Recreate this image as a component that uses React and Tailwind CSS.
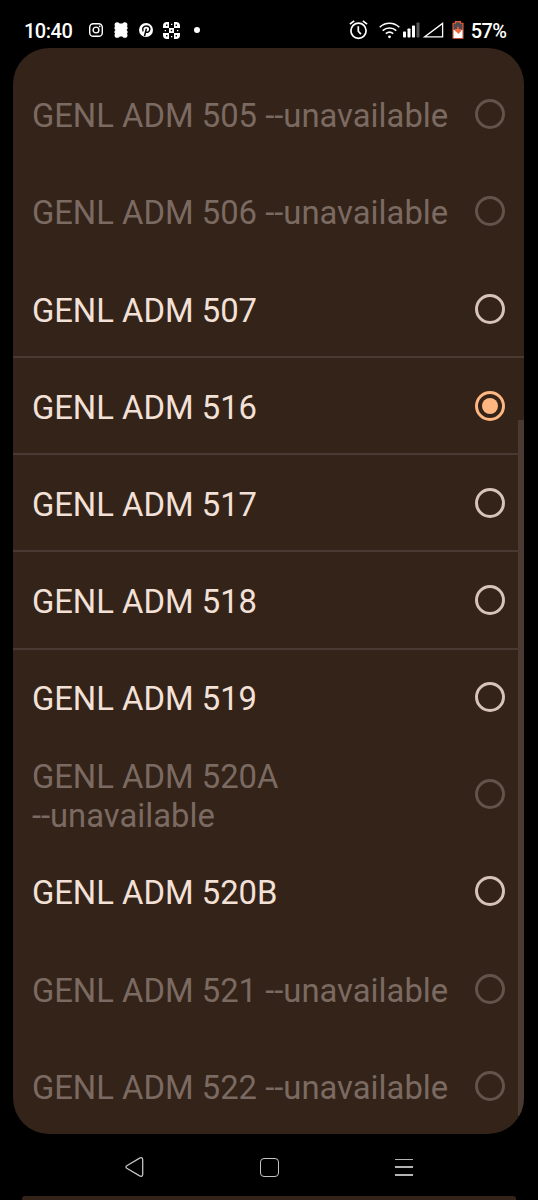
const options = [
  { label: "GENL ADM 505 --unavailable", disabled: true },
  { label: "GENL ADM 506 --unavailable", disabled: true },
  { label: "GENL ADM 507", divider: true },
  { label: "GENL ADM 516", selected: true, divider: true },
  { label: "GENL ADM 517", divider: true },
  { label: "GENL ADM 518", divider: true },
  { label: "GENL ADM 519" },
  { label: "GENL ADM 520A\n--unavailable", disabled: true },
  { label: "GENL ADM 520B" },
  { label: "GENL ADM 521 --unavailable", disabled: true },
  { label: "GENL ADM 522 --unavailable", disabled: true },
];

function InstagramIcon() {
  return (
    <svg className="w-[14px] h-[14px]" viewBox="0 0 14 14" fill="none" stroke="#fff" strokeWidth="1.4">
      <rect x="0.7" y="0.7" width="12.6" height="12.6" rx="3.6" />
      <circle cx="7" cy="7" r="2.9" />
      <circle cx="10.7" cy="3.3" r="0.9" fill="#fff" stroke="none" />
    </svg>
  );
}

function FlowerIcon() {
  return (
    <svg className="w-[14px] h-[16px] ml-[11px]" viewBox="0 0 14 16" fill="#fff">
      <rect x="1.3" y="1.5" width="11.4" height="13" />
      <circle cx="3.2" cy="2.8" r="2.6" />
      <circle cx="10.8" cy="2.8" r="2.6" />
      <circle cx="3.2" cy="13.2" r="2.6" />
      <circle cx="10.8" cy="13.2" r="2.6" />
      <circle cx="2" cy="6" r="1.7" />
      <circle cx="2" cy="10" r="1.7" />
      <circle cx="12" cy="6" r="1.7" />
      <circle cx="12" cy="10" r="1.7" />
    </svg>
  );
}

function PinterestIcon() {
  return (
    <svg className="w-[14px] h-[14px] ml-[11px]" viewBox="0 0 14 14" fill="none">
      <circle cx="7" cy="7" r="7" fill="#fff" />
      <path
        d="M4.2 8.3C2.6 5.6 4.6 3 7.3 3c2.4 0 3.9 1.6 3.5 3.7-.4 2.4-2.9 3.4-4 1.9M7.4 5.6 5.5 13"
        stroke="#000"
        strokeWidth="1.5"
      />
    </svg>
  );
}

function GridIcon() {
  return (
    <svg className="w-[17px] h-[17px] ml-[10px]" viewBox="0 0 17 17" fill="#fff">
      <path d="M4 0h2v6H0V4a4 4 0 0 1 4-4ZM11 0h2a4 4 0 0 1 4 4v2h-6ZM0 11h6v6H4a4 4 0 0 1-4-4ZM11 11h6v2a4 4 0 0 1-4 4h-2Z" />
      <path d="M6 6h5v5H6zM8 1.7h1.3V3H8zM8 14h1.3v1.3H8zM1.7 8H3v1.3H1.7zM14 8h1.3v1.3H14z" />
      <path d="M3 2.6h1.4V4H3zM12.6 2.6H14V4h-1.4zM3 13h1.4v1.4H3zM12.6 13H14v1.4h-1.4zM7.8 7.8h1.4v1.4H7.8z" fill="#000" />
    </svg>
  );
}

function AlarmIcon() {
  return (
    <svg className="w-[19px] h-[20px]" viewBox="0 0 19 20" fill="none" stroke="#fff" strokeWidth="1.7">
      <circle cx="9.5" cy="10.8" r="7.6" />
      <path d="M9.3 6.3v4.9l2.6 2.9M.9 4.2 5.2.9M18.1 4.2 13.8.9" />
    </svg>
  );
}

function WifiIcon() {
  return (
    <svg className="w-[21px] h-[17px] ml-[11px]" viewBox="0 0 21 17" fill="none" stroke="#fff" strokeWidth="1.6">
      <path d="M.7 5.3a14 14 0 0 1 19.6 0M3.7 8.6a10 10 0 0 1 13.6 0M6.8 11.7a5.8 5.8 0 0 1 7.4 0" />
      <circle cx="10.5" cy="14.8" r="1.4" fill="#fff" stroke="none" />
    </svg>
  );
}

function SignalIcon() {
  return (
    <svg className="w-[17px] h-[16px] ml-[3px]" viewBox="0 0 17 16" fill="#fff">
      <rect x="0" y="9.5" width="3" height="6" rx="0.7" />
      <rect x="4.5" y="6.5" width="3" height="9" rx="0.7" />
      <rect x="9" y="3.5" width="3" height="12" rx="0.7" />
      <rect x="13.5" y="0.5" width="3" height="15" rx="0.7" fill="#555" />
    </svg>
  );
}

function EmptySignalIcon() {
  return (
    <svg className="w-[21px] h-[16px] ml-[3px]" viewBox="0 0 21 16" fill="none" stroke="#fff" strokeWidth="1.3">
      <path d="M1.8 14.8H19.6V1.4Z" />
    </svg>
  );
}

function BatteryIcon() {
  return (
    <svg className="w-[12px] h-[18px] ml-[8px]" viewBox="0 0 12 18">
      <path d="M1 2.3h2.5V.6h5v1.7H11v15H1Z" fill="#514a50" stroke="#e9603c" strokeWidth="1.1" />
      <path d="M1.5 8.5 4 10h4l2.5-1.5v8.4h-9Z" fill="#fff" />
      <path d="M5.2 5.7h1.5V8h2.5v2L6.3 13 5 11.4 2.8 9.8V8h2.4Z" fill="#ed6841" />
    </svg>
  );
}

function StatusBar() {
  return (
    <header className="flex h-12 shrink-0 items-center justify-between pl-6 pr-[31.5px] pt-[12px] font-medium text-[20px] leading-none text-white">
      <div className="flex items-center">
        <span className="w-[65px] pt-px tracking-[-0.5px]">10:40</span>
        <InstagramIcon />
        <FlowerIcon />
        <PinterestIcon />
        <GridIcon />
        <span className="ml-[14px] size-[6px] rounded-full bg-white" />
      </div>
      <div className="flex items-center">
        <AlarmIcon />
        <WifiIcon />
        <SignalIcon />
        <EmptySignalIcon />
        <BatteryIcon />
        <span className="ml-[7px] pt-px tracking-[-0.6px]">57%</span>
      </div>
    </header>
  );
}

function Radio({ selected, disabled }) {
  if (selected) {
    return (
      <span className="flex size-[30px] shrink-0 items-center justify-center rounded-full border-3 border-[#ffb681]">
        <span className="size-[16px] rounded-full bg-[#ffb681]" />
      </span>
    );
  }
  return (
    <span
      className={
        disabled
          ? "size-[30px] shrink-0 rounded-full border-3 border-[#63534a]"
          : "size-[30px] shrink-0 rounded-full border-3 border-[#d7c3b7]"
      }
    />
  );
}

function OptionRow({ option }) {
  return (
    <li
      className={
        option.divider
          ? "flex h-[97.15px] items-center justify-between border-b-2 border-[#4a3932] pl-[18.5px] pr-[19px]"
          : "flex h-[97.15px] items-center justify-between border-b-2 border-transparent pl-[18.5px] pr-[19px]"
      }
    >
      <span
        className={
          option.disabled
            ? "w-[425px] whitespace-pre-line pt-[4.6px] text-[32.8px] leading-[38.5px] text-[#7b6a61]"
            : "w-[425px] whitespace-pre-line pt-[4.6px] text-[32.8px] leading-[38.5px] text-[#f3e1d8]"
        }
      >
        {option.label}
      </span>
      <Radio selected={option.selected} disabled={option.disabled} />
    </li>
  );
}

function NavBar() {
  return (
    <nav className="flex h-[62px] shrink-0 items-center justify-center gap-[116px] pr-[1px] pt-[5px]">
      <svg className="w-[19px] h-[20px]" viewBox="0 0 19 20" fill="none" stroke="#c4c4c4" strokeWidth="1.3">
        <path d="M1.8 8.8 14.6 1.1Q17.6-.2 17.7 2.8V17.2Q17.6 20.2 14.6 18.9L1.8 11.2Q.2 10 1.8 8.8Z" />
      </svg>
      <span className="size-[19px] rounded-[4px] border-[1.5px] border-[#c4c4c4]" />
      <span className="flex h-[17px] w-[18px] flex-col justify-between">
        <span className="h-[1.5px] bg-[#b4b4b4]" />
        <span className="h-[1.5px] bg-[#b4b4b4]" />
        <span className="h-[1.5px] bg-[#b4b4b4]" />
      </span>
    </nav>
  );
}

export default function App() {
  return (
    <div className="flex h-[1200px] w-[538px] flex-col overflow-hidden bg-black font-['Roboto',sans-serif]">
      <StatusBar />
      <main className="relative ml-[13.4px] h-[1085.5px] w-[511px] shrink-0 overflow-hidden rounded-[36px] bg-[#332319] pt-[18.7px]">
        <ul>
          {options.map((option) => (
            <OptionRow key={option.label} option={option} />
          ))}
        </ul>
        {/* scrollbar thumb */}
        <div className="absolute right-0 top-[372px] h-[696px] w-[6px] bg-[#4b3a32]" />
      </main>
      <NavBar />
      <div className="ml-[22px] mr-[22px] h-[5px] shrink-0 rounded-t-[3px] bg-[#332319]" />
    </div>
  );
}
